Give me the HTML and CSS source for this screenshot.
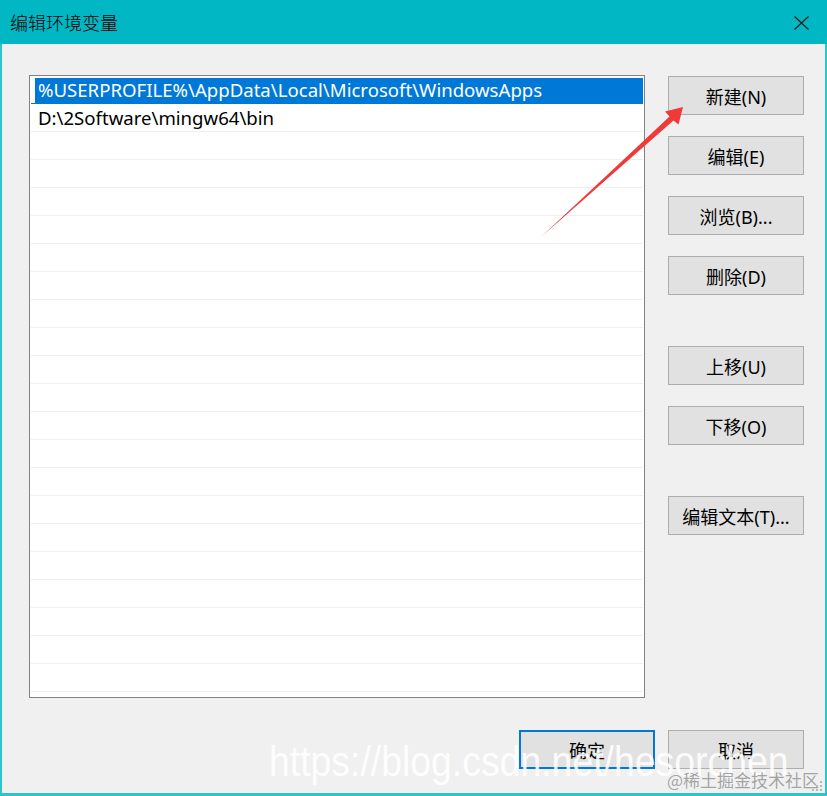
FILE: index.html
```html
<!DOCTYPE html>
<html lang="zh-CN">
<head>
    <meta charset="UTF-8">
    <title>编辑环境变量</title>
    <link rel="stylesheet" href="styles.css">
</head>
<body>
    <div class="window">
        <div class="titlebar">
            <span class="title">编辑环境变量</span>
            <span class="close">
                <svg width="15" height="14" viewBox="0 0 15 14"><path d="M0.5 0.5 L14.5 13.5 M14.5 0.5 L0.5 13.5" stroke="#1b1b1b" stroke-width="1.1" fill="none"/></svg>
            </span>
        </div>

        <div class="body">
            <div class="main">
                <div class="list">
                    <div class="row selected">%USERPROFILE%\AppData\Local\Microsoft\WindowsApps</div>
                    <div class="row">D:\2Software\mingw64\bin</div>
                    <div class="row"></div>
                    <div class="row"></div>
                    <div class="row"></div>
                    <div class="row"></div>
                    <div class="row"></div>
                    <div class="row"></div>
                    <div class="row"></div>
                    <div class="row"></div>
                    <div class="row"></div>
                    <div class="row"></div>
                    <div class="row"></div>
                    <div class="row"></div>
                    <div class="row"></div>
                    <div class="row"></div>
                    <div class="row"></div>
                    <div class="row"></div>
                    <div class="row"></div>
                    <div class="row"></div>
                    <div class="row"></div>
                    <div class="row"></div>
                    <div class="row"></div>
                </div>

                <div class="side">
                    <div class="group">
                        <button class="btn">新建(N)</button>
                        <button class="btn">编辑(E)</button>
                        <button class="btn">浏览(B)...</button>
                        <button class="btn">删除(D)</button>
                    </div>
                    <div class="group">
                        <button class="btn">上移(U)</button>
                        <button class="btn">下移(O)</button>
                    </div>
                    <div class="group">
                        <button class="btn">编辑文本(T)...</button>
                    </div>
                </div>
            </div>

            <div class="footer">
                <button class="btn btn-default">确定</button>
                <button class="btn">取消</button>
            </div>
        </div>

        <!-- annotation arrow drawn over the dialog -->
        <svg class="arrow" width="827" height="796" viewBox="0 0 827 796">
            <polygon points="541,237 669.5,116.5 665,111.5 683,107 678.5,124.5 673.5,120.5" fill="#f03a3a"/>
        </svg>

        <div class="watermark">https://blog.csdn.net/hesorchen</div>
        <div class="badge">@稀土掘金技术社区</div>

        <svg class="grip" width="12" height="12" viewBox="0 0 12 12">
            <rect x="9" y="1" width="2" height="2" fill="#b8b8b8"/>
            <rect x="5" y="5" width="2" height="2" fill="#b8b8b8"/>
            <rect x="9" y="5" width="2" height="2" fill="#b8b8b8"/>
            <rect x="1" y="9" width="2" height="2" fill="#b8b8b8"/>
            <rect x="5" y="9" width="2" height="2" fill="#b8b8b8"/>
            <rect x="9" y="9" width="2" height="2" fill="#b8b8b8"/>
        </svg>
    </div>
</body>
</html>
```

FILE: styles.css
```css
* {
    margin: 0;
    padding: 0;
    box-sizing: border-box;
}

body {
    font-family: "Noto Sans", "Noto Sans CJK SC", sans-serif;
    background: #f0f0f0;
    width: 827px;
    height: 796px;
    overflow: hidden;
}

.window {
    position: relative;
    width: 827px;
    height: 796px;
    background: #f0f0f0;
}

.titlebar {
    height: 44px;
    background: #00b7c3;
    display: flex;
    align-items: center;
    justify-content: space-between;
    padding-left: 10px;
}

.title {
    font-family: "Noto Sans CJK SC", sans-serif;
    font-size: 18px;
    font-weight: 300;
    color: #000;
}

.close {
    width: 52px;
    display: flex;
    justify-content: center;
    padding-top: 1px;
}

.body {
    height: 752px;
    border: 2px solid #2fc3cc;
    border-top: none;
    border-bottom-width: 3px;
    padding: 31px 21px 0 27px;
}

.main {
    display: flex;
    gap: 23px;
}

.list {
    width: 616px;
    height: 623px;
    background: #fff;
    border: 1px solid #828282;
    overflow: hidden;
}

.row {
    height: 28px;
    margin: 0 1px;
    padding: 1px 0 0 7px;
    border-bottom: 1px solid #efefef;
    font-size: 18.6px;
    line-height: 26px;
    color: #000;
    white-space: nowrap;
}

.row.selected {
    background: #0078d7;
    color: #fff;
    box-shadow: inset 4px 2px 0 #fff;
    border-bottom-color: #0078d7;
    padding-top: 1px;
}

.side {
    display: flex;
    flex-direction: column;
    gap: 51px;
    padding-top: 1px;
}

.group {
    display: flex;
    flex-direction: column;
    gap: 21px;
}

.btn {
    width: 136px;
    height: 39px;
    background: #e1e1e1;
    border: 1px solid #adadad;
    font-family: "Noto Sans", "Noto Sans CJK SC", sans-serif;
    font-size: 18px;
    color: #000;
}

.btn-default {
    border: 2px solid #0078d7;
}

.footer {
    display: flex;
    justify-content: flex-end;
    gap: 13px;
    margin-top: 32px;
}

.arrow {
    position: absolute;
    left: 0;
    top: 0;
    pointer-events: none;
}

.watermark {
    position: absolute;
    left: 269px;
    top: 741px;
    font-family: "Liberation Sans", sans-serif;
    font-size: 42px;
    line-height: 42px;
    color: rgba(255, 255, 255, 0.88);
    white-space: nowrap;
    transform: scaleX(0.89);
    transform-origin: left top;
    pointer-events: none;
}

.badge {
    position: absolute;
    left: 667px;
    top: 771px;
    font-family: "Noto Sans CJK SC", sans-serif;
    font-size: 17px;
    line-height: 18px;
    color: #a3a3a3;
    text-shadow: 0 0 1px #fff;
    white-space: nowrap;
}

.grip {
    position: absolute;
    left: 811px;
    top: 780px;
}
```
